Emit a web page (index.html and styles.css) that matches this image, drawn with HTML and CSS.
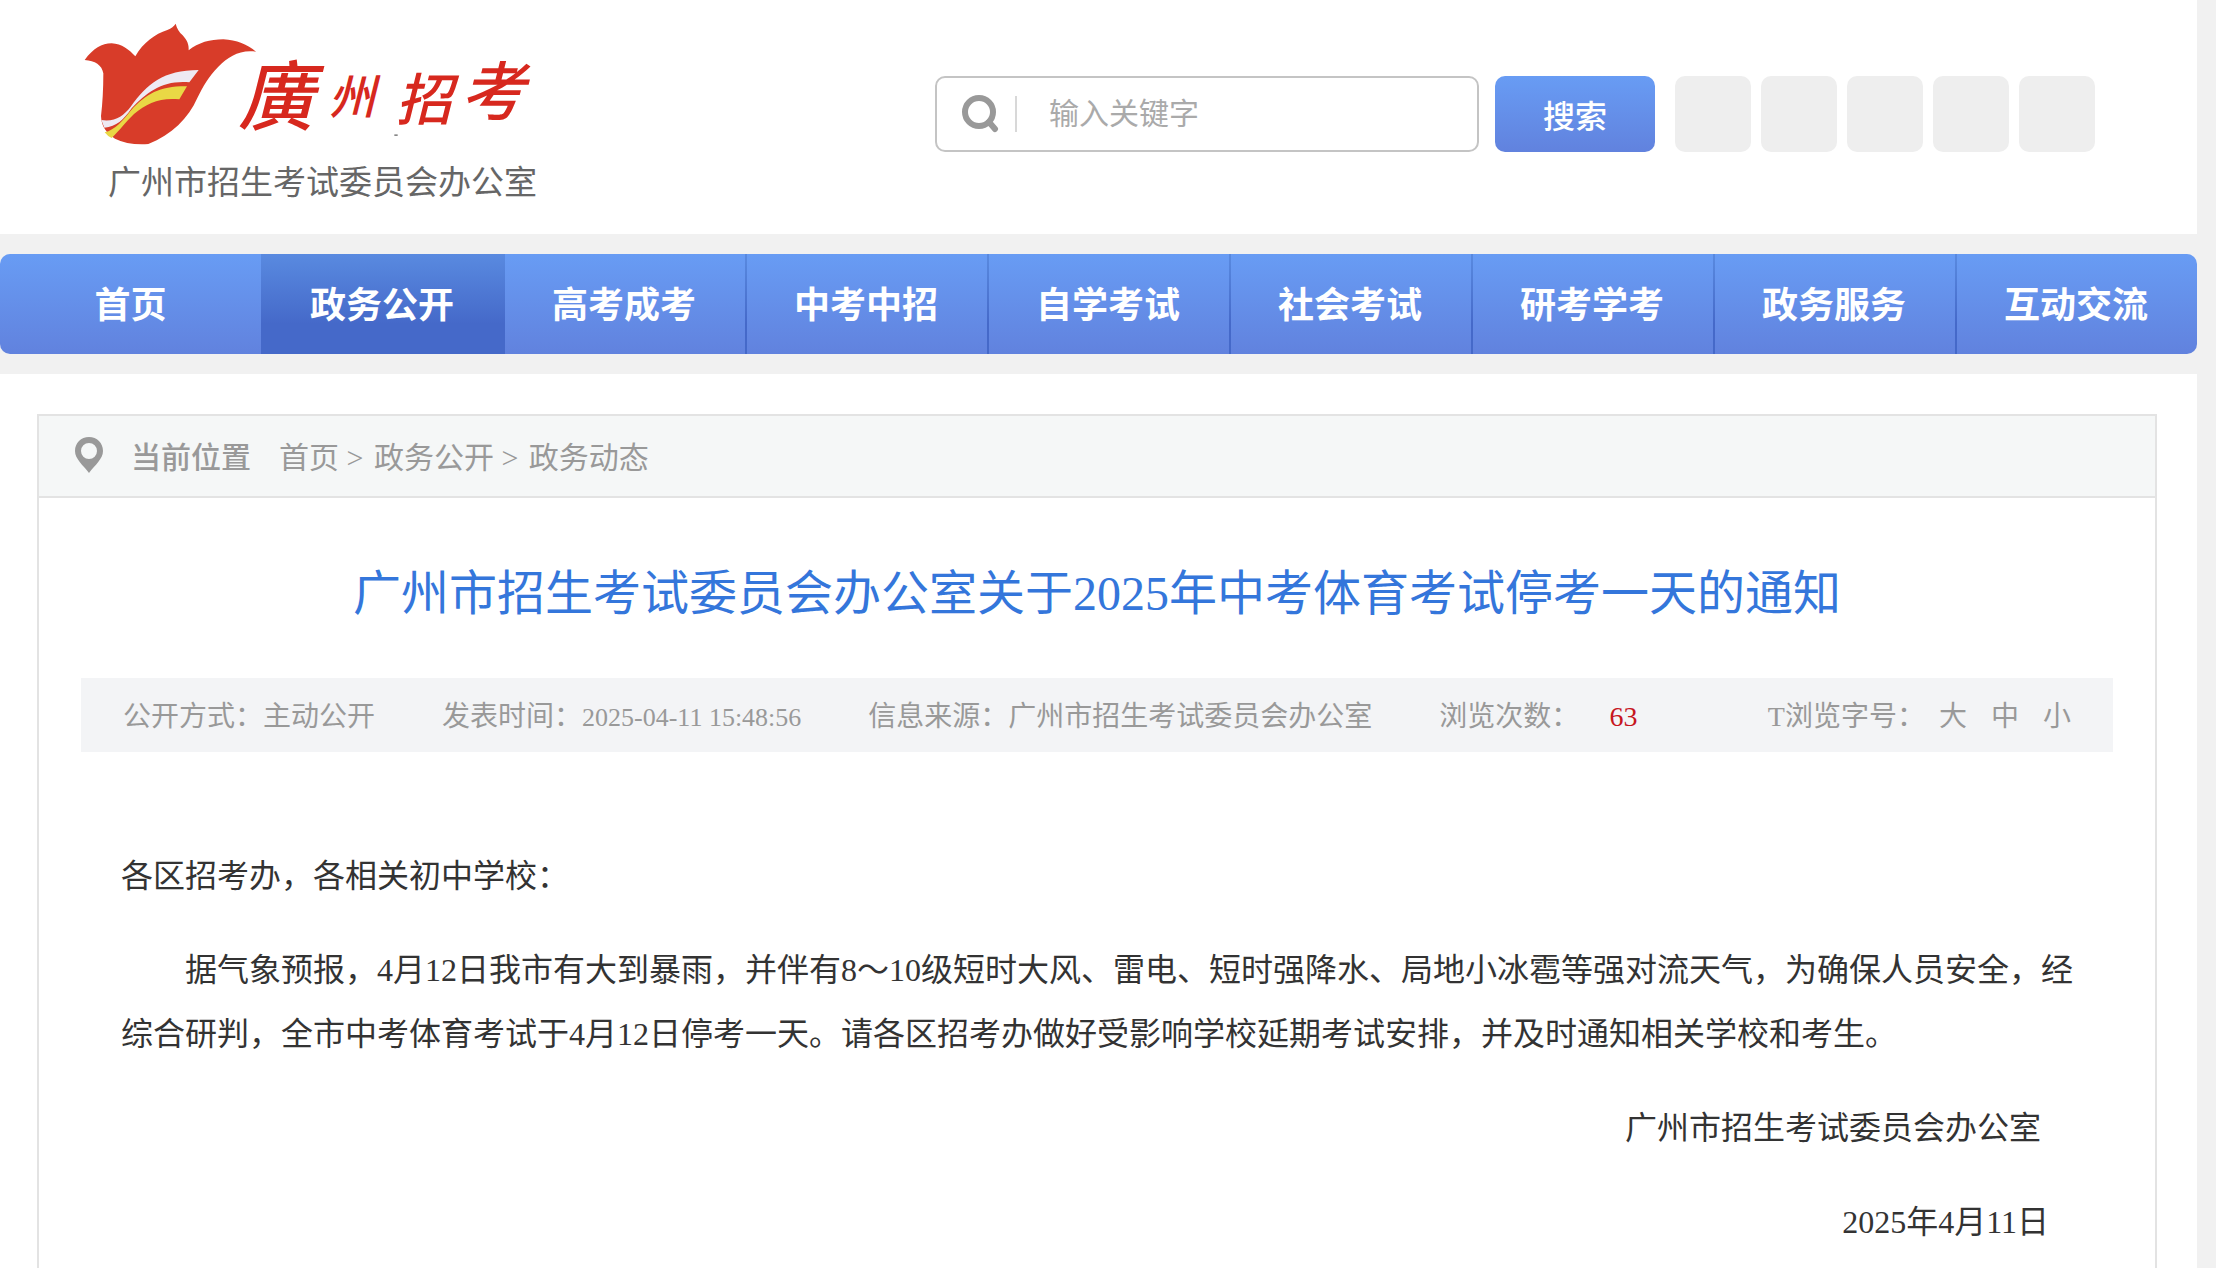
FILE: index.html
```html
<!DOCTYPE html>
<html lang="zh-CN">
<head>
    <meta charset="UTF-8">
    <meta name="viewport" content="width=device-width, initial-scale=1.0">
    <title>广州市招生考试委员会办公室关于2025年中考体育考试停考一天的通知</title>
    <link rel="stylesheet" href="styles.css">
</head>
<body>

    <!-- Header -->
    <header class="header">
        <div class="logo">
            <svg class="logo-mark" viewBox="0 0 1500 420">
                <path fill="#d83c29" d="M74 150C100 115 125 100 155 100C185 101 208 120 226 139C250 97 285 72 322 60Q340 52 347 41Q352 62 368 76C382 92 387 104 386 121C415 98 450 88 490 88C530 90 562 104 588 125C540 118 505 140 475 170C445 200 430 228 412 264C385 325 335 375 265 402Q205 406 165 386C140 370 124 350 123 318Q130 260 130 190C126 165 105 152 74 150Z"/>
                <path fill="#eeeaf3" d="M124 330C165 336 190 318 212 290C262 222 310 180 416 180L388 217C310 210 262 245 215 295C190 330 170 350 133 353Z"/>
                <path fill="#e9d845" d="M134 367C165 360 190 330 212 302C260 250 300 228 381 229L358 268C300 262 260 280 222 312C195 338 180 360 155 384Q142 378 134 367Z"/>
                <text class="logo-char" x="534" y="342" font-size="228">廣</text>
                <text class="logo-char" x="806" y="312" font-size="140">州</text>
                <text class="logo-char" x="1008" y="330" font-size="168">招</text>
                <text class="logo-char" x="1202" y="316" font-size="192">考</text>
                <rect x="1003" y="373" width="10" height="5" fill="#888"/>
            </svg>
            <p class="logo-name">广州市招生考试委员会办公室</p>
        </div>

        <form class="search">
            <label class="search-box">
                <svg class="search-icon" viewBox="0 0 38 38">
                    <circle cx="18" cy="17" r="14" fill="none" stroke="#999" stroke-width="6"/>
                    <path d="M28 27L34 34" stroke="#999" stroke-width="6" stroke-linecap="round"/>
                </svg>
                <input type="text" class="search-input" placeholder="输入关键字" aria-label="输入关键字">
            </label>
            <button type="submit" class="search-btn">搜索</button>
            <div class="tools">
                <span class="tool"></span>
                <span class="tool"></span>
                <span class="tool"></span>
                <span class="tool"></span>
                <span class="tool"></span>
            </div>
        </form>
    </header>

    <!-- Main menu -->
    <nav class="nav">
        <a href="#" class="nav-home">首页</a>
        <a href="#" class="active">政务公开</a>
        <a href="#">高考成考</a>
        <a href="#">中考中招</a>
        <a href="#">自学考试</a>
        <a href="#">社会考试</a>
        <a href="#">研考学考</a>
        <a href="#">政务服务</a>
        <a href="#">互动交流</a>
    </nav>

    <!-- Content -->
    <main class="main">
        <div class="panel">
            <div class="crumbs">
                <svg class="pin" viewBox="0 0 28 36">
                    <path fill="#999" fill-rule="evenodd" d="M14 0C22 0 28 6 28 14C28 22 20 28 14 36C8 28 0 22 0 14C0 6 6 0 14 0ZM14 6A8 8 0 1 0 14 22A8 8 0 1 0 14 6Z"/>
                </svg>
                <strong>当前位置</strong>
                <div class="path">
                    <a href="#">首页</a> &gt; <a href="#">政务公开</a> &gt; <a href="#">政务动态</a>
                </div>
            </div>

            <article class="article">
                <h1>广州市招生考试委员会办公室关于2025年中考体育考试停考一天的通知</h1>

                <div class="meta">
                    <span>公开方式：主动公开</span>
                    <span>发表时间：<time>2025-04-11 15:48:56</time></span>
                    <span>信息来源：广州市招生考试委员会办公室</span>
                    <span>浏览次数：<b class="count">63</b></span>
                    <div class="font-size">
                        <span>T浏览字号：</span>
                        <button type="button">大</button>
                        <button type="button">中</button>
                        <button type="button">小</button>
                    </div>
                </div>

                <div class="text">
                    <p>各区招考办，各相关初中学校：</p>
                    <p class="indent">据气象预报，4月12日我市有大到暴雨，并伴有8～10级短时大风、雷电、短时强降水、局地小冰雹等强对流天气，为确保人员安全，经综合研判，全市中考体育考试于4月12日停考一天。请各区招考办做好受影响学校延期考试安排，并及时通知相关学校和考生。</p>
                    <p class="sign">广州市招生考试委员会办公室</p>
                    <p class="sign date">2025年4月11日</p>
                </div>
            </article>
        </div>
    </main>

</body>
</html>
```
FILE: styles.css
```css
* {
    box-sizing: border-box;
}

body {
    margin: 0;
    padding-right: 19px;
    min-height: 100vh;
    display: flex;
    flex-direction: column;
    background: #f1f1f1;
    color: #333;
    font-family: "Liberation Serif", "Noto Sans CJK SC", serif;
}

a {
    color: inherit;
    text-decoration: none;
}

p {
    margin: 0;
}

button,
input {
    font-family: inherit;
    border: none;
    padding: 0;
}

/* Header */
.header {
    display: flex;
    justify-content: space-between;
    align-items: flex-start;
    height: 234px;
    padding: 10px 102px 0 60px;
    background: #fff;
}

.logo-mark {
    display: block;
    width: 500px;
    height: 140px;
}

.logo-char {
    fill: #d7281e;
    font-family: "Noto Sans CJK TC", sans-serif;
    font-style: italic;
    font-weight: 500;
}

.logo-name {
    padding-left: 48px;
    font-family: "Noto Sans CJK SC", sans-serif;
    font-size: 33px;
    line-height: 60px;
    color: #666;
}

.search {
    display: flex;
    padding-top: 66px;
}

.search-box {
    display: flex;
    align-items: center;
    width: 544px;
    height: 76px;
    padding: 0 24px;
    border: 2px solid #c4c4c4;
    border-radius: 10px;
}

.search-icon {
    width: 38px;
    height: 38px;
}

.search-input {
    flex: 1;
    min-width: 0;
    height: 36px;
    margin-left: 16px;
    padding-left: 32px;
    border-left: 2px solid #d8d8d8;
    background: none;
    font-size: 30px;
    outline: none;
}

.search-input::placeholder {
    color: #aaa;
}

.search-btn {
    width: 160px;
    margin-left: 16px;
    border-radius: 10px;
    background: linear-gradient(#689cf4, #6182de);
    color: #fff;
    font-size: 32px;
    font-weight: 500;
    cursor: pointer;
}

.tools {
    display: flex;
    gap: 10px;
    margin-left: 20px;
}

.tool {
    width: 76px;
    height: 76px;
    border-radius: 10px;
    background: #eee;
}

/* Main menu */
.nav {
    display: flex;
    height: 100px;
    margin: 20px 0;
    border-radius: 10px;
    overflow: hidden;
    background: linear-gradient(#689cf4, #6182de);
}

.nav a {
    flex: 242 1 0;
    background: linear-gradient(#598ae0, #4569c9 70%) left / 2px 100% no-repeat;
    color: #fff;
    font-size: 36px;
    font-weight: bold;
    line-height: 104px;
    text-align: center;
}

.nav .nav-home {
    flex-grow: 261;
    background: none;
}

.nav .active {
    background-size: 100% 100%;
}

/* Content */
.main {
    flex: 1;
    display: flex;
    padding: 40px 40px 0 37px;
    background: #fff;
}

.panel {
    flex: 1;
    border: 2px solid #e3e3e3;
    border-bottom: none;
}

.crumbs {
    display: flex;
    align-items: center;
    height: 82px;
    padding: 0 36px 2px;
    border-bottom: 2px solid #e3e3e3;
    background: #f5f7f7;
    color: #999;
    font-size: 30px;
}

.crumbs strong {
    margin: 0 28px;
    font-weight: 500;
}

.path a + a {
    margin-left: 3px;
}

.pin {
    width: 28px;
    height: 36px;
}

.article {
    padding: 0 42px;
}

.article h1 {
    margin: 60px 0 48px;
    color: #3476db;
    font-size: 48px;
    font-weight: normal;
    line-height: 72px;
    text-align: center;
}

.meta {
    display: flex;
    align-items: center;
    gap: 67px;
    height: 74px;
    padding: 0 42px 2px;
    background: #f3f4f6;
    color: #999;
    font-size: 28px;
    white-space: nowrap;
}

.meta time {
    font-size: 26px;
}

.count {
    margin-left: 30px;
    color: #c7161e;
    font-weight: normal;
}

.font-size {
    display: flex;
    gap: 24px;
    margin-left: auto;
}

.font-size span {
    margin-right: -10px;
}

.font-size button {
    background: none;
    color: inherit;
    font-size: 28px;
    cursor: pointer;
}

.text {
    display: flex;
    flex-direction: column;
    gap: 30px;
    padding: 92px 40px 0;
    font-size: 32px;
    line-height: 64px;
}

.indent {
    text-indent: 2em;
}

.sign {
    padding-right: 32px;
    text-align: right;
}

.date {
    padding-right: 24px;
}
```
